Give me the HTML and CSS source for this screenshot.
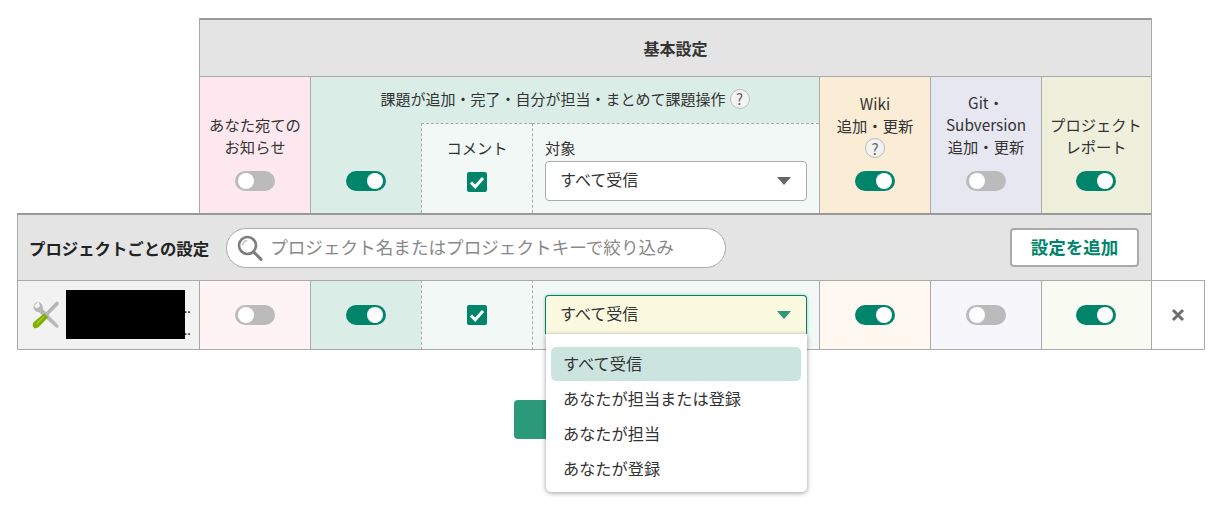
FILE: index.html
```html
<!DOCTYPE html>
<html lang="ja">
<head>
<meta charset="utf-8">
<title>通知設定</title>
<link rel="stylesheet" href="styles.css">
</head>
<body>
<main class="page">
  <div class="matrix">
    <div class="cell head-basic">基本設定</div>

    <div class="cell col-own tall bg-pink">
      <span class="label">あなた宛ての<br>お知らせ</span>
      <span class="toggle"></span>
    </div>
    <div class="cell issue-title bg-green">
      課題が追加・完了・自分が担当・まとめて課題操作
      <span class="help">?</span>
    </div>
    <div class="cell issue-toggle bg-green"><span class="toggle on"></span></div>
    <div class="cell issue-comment bg-light dashed dashed-top">
      <span class="label">コメント</span>
      <span class="check"><svg viewBox="0 0 20 20"><path d="M4 10.500 8.200 14.700 16 6" fill="none" stroke="#fff" stroke-width="3"/></svg></span>
    </div>
    <div class="cell issue-target bg-light dashed dashed-top">
      <span class="label">対象</span>
      <div class="select"><span>すべて受信</span><i class="caret"></i></div>
    </div>
    <div class="cell col-wiki tall bg-orange">
      <span class="label">Wiki<br>追加・更新<br><span class="help help-line">?</span></span>
      <span class="toggle on"></span>
    </div>
    <div class="cell col-git tall bg-lav">
      <span class="label">Git・<br>Subversion<br>追加・更新</span>
      <span class="toggle"></span>
    </div>
    <div class="cell col-report tall bg-olive edge">
      <span class="label">プロジェクト<br>レポート</span>
      <span class="toggle on"></span>
    </div>

    <div class="cell toolbar">
      <h2 class="toolbar-title">プロジェクトごとの設定</h2>
      <div class="search">
        <svg class="search-icon" viewBox="0 0 26 26"><circle cx="10.500" cy="10.500" r="8.500" fill="#fff" stroke="#7d7d7d" stroke-width="2.600"/><path d="M5.600 10.500a5 5 0 0 1 4.600-4.900" fill="none" stroke="#c4c4c4" stroke-width="1.600"/><path d="M16.800 17 24 24.400" stroke="#7d7d7d" stroke-width="3" stroke-linecap="round"/></svg>
        <span class="placeholder">プロジェクト名またはプロジェクトキーで絞り込み</span>
      </div>
      <button class="add-btn">設定を追加</button>
    </div>

    <div class="cell row project">
      <svg class="tools" viewBox="0 0 28 30">
        <path d="M25 3.500 11 18" stroke="#b5b5b5" stroke-width="3.600" stroke-linecap="round"/>
        <path d="M6.500 1.500a6 6 0 0 0-5 6.500c.6 2.600 2.800 4.200 5.300 3.900L24 27.500c1.500 1.200 3.400-.7 2.200-2.200L10.800 9c.4-3.200-1.300-6-4-7.200L8 6.300 5 8.500 1.900 6" fill="#b8b8b8"/>
        <path d="M12 13.500 2.500 21.500c-2.200 2-2.300 4.500-.9 5.900 1.400 1.400 3.800 1.200 5.600-.8l9-9.300z" fill="#7fb000"/>
        <path d="M12 16.500 4.500 24" stroke="#a2cf2a" stroke-width="1.200"/>
      </svg>
      <div class="project-name">
        <span class="name-line">…</span>
        <span class="name-line">…</span>
      </div>
    </div>
    <div class="cell row bg-pink-soft"><span class="toggle"></span></div>
    <div class="cell row bg-green"><span class="toggle on"></span></div>
    <div class="cell row bg-light dashed"><span class="check"><svg viewBox="0 0 20 20"><path d="M4 10.500 8.200 14.700 16 6" fill="none" stroke="#fff" stroke-width="3"/></svg></span></div>
    <div class="cell row row-target bg-light dashed">
      <div class="select open"><span>すべて受信</span><i class="caret"></i></div>
      <ul class="menu">
        <li class="menu-item active">すべて受信</li>
        <li class="menu-item">あなたが担当または登録</li>
        <li class="menu-item">あなたが担当</li>
        <li class="menu-item">あなたが登録</li>
      </ul>
    </div>
    <div class="cell row bg-orange-soft"><span class="toggle on"></span></div>
    <div class="cell row bg-lav-soft"><span class="toggle"></span></div>
    <div class="cell row bg-olive-soft edge"><span class="toggle on"></span></div>
    <div class="cell row close-cell">
      <svg class="close" viewBox="0 0 14 14"><path d="M2 2 12 12M12 2 2 12" stroke="#6f6f6f" stroke-width="3"/></svg>
    </div>
  </div>

  <div class="actions"><button class="save" aria-label="保存"></button></div>
</main>
</body>
</html>
```

FILE: styles.css
```css
* { box-sizing: border-box; }
html, body { margin: 0; padding: 0; background: #fff; }
body {
  font-family: "Noto Sans CJK JP", "Noto Sans", sans-serif;
  font-size: 15.300px;
  line-height: 22px;
  color: #333;
}
.page { padding: 18px 0 0 17px; height: 507px; }

.matrix {
  display: grid;
  grid-template-columns: 182px 111px 111px 111px 287px 111px 111px 111px 53px;
  grid-template-rows: 58px 47px 90px 67px 70px;
  width: 1188px;
}
.cell {
  border-left: 1px solid #aaa;
  border-top: 1px solid #aaa;
  display: flex;
  align-items: center;
  justify-content: center;
  min-width: 0;
}
.edge { border-right: 1px solid #aaa; padding-right: 1px; }

.head-basic {
  grid-column: 2 / 9;
  grid-row: 1;
  background: #e4e4e4;
  border-top: 2px solid #999;
  border-right: 1px solid #aaa;
  font-weight: 700;
  font-size: 16px;
}

.tall {
  grid-row: 2 / 4;
  flex-direction: column;
  justify-content: flex-end;
  padding-bottom: 22px;
  gap: 14px;
  text-align: center;
}
.col-own { grid-column: 2; }
.col-wiki { grid-column: 6; gap: 13px; }
.col-git { grid-column: 7; }
.col-report { grid-column: 8; }
.label { display: block; }

.issue-title { grid-column: 3 / 6; grid-row: 2; gap: 4px; padding-bottom: 3px; font-size: 15px; }
.issue-toggle { grid-column: 3; grid-row: 3; border-top: 0; align-items: flex-end; padding-bottom: 22px; }
.issue-comment {
  grid-column: 4; grid-row: 3;
  flex-direction: column;
  justify-content: flex-end;
  padding-bottom: 21px;
  gap: 14px;
}
.issue-target {
  grid-column: 5; grid-row: 3;
  flex-direction: column;
  align-items: flex-start;
  justify-content: flex-end;
  padding: 0 12px 12px 12px;
  gap: 3px;
}

.dashed { border-left: 1px dashed #aaa; }
.dashed-top { border-top: 1px dashed #aaa; }

.bg-pink { background: #fce8ee; }
.bg-green { background: #daeee7; }
.bg-light { background: #f2f8f6; }
.bg-orange { background: #fbecd6; }
.bg-lav { background: #e7e7f1; }
.bg-olive { background: #eff0db; }
.bg-pink-soft { background: #fef4f5; }
.bg-orange-soft { background: #fef8f0; }
.bg-lav-soft { background: #f6f6fb; }
.bg-olive-soft { background: #f9faf2; }

.toggle {
  display: block;
  position: relative;
  flex: none;
  width: 40px;
  height: 20px;
  border-radius: 10px;
  background: #bbb;
}
.toggle::after {
  content: "";
  position: absolute;
  top: 2px;
  left: 3px;
  width: 16px;
  height: 16px;
  border-radius: 50%;
  background: #fff;
}
.toggle.on { background: #00856b; }
.toggle.on::after { left: 21px; }

.check {
  display: block;
  flex: none;
  width: 20px;
  height: 20px;
  border-radius: 2px;
  background: #00856b;
}
.check svg { display: block; width: 20px; height: 20px; }

.help {
  display: inline-flex;
  align-items: center;
  justify-content: center;
  width: 20px;
  height: 20px;
  border-radius: 50%;
  border: 1px solid #bbb;
  background: #f3f3f3;
  color: #666;
  font-size: 15px;
  line-height: 1;
  vertical-align: middle;
}
.help-line { vertical-align: top; margin-top: 2px; }

.select {
  display: flex;
  align-items: center;
  justify-content: space-between;
  width: 262px;
  height: 40px;
  padding: 0 15px 4px 14px;
  background: #fff;
  border: 1px solid #aaa;
  border-radius: 4px;
  font-size: 16px;
}
.caret {
  display: block;
  width: 0;
  height: 0;
  margin-top: 4px;
  border-left: 7.500px solid transparent;
  border-right: 7.500px solid transparent;
  border-top: 8px solid #666;
}
.select.open {
  background: #fbf9e0;
  border-color: #00856b;
  border-bottom: 0;
  border-radius: 4px 4px 0 0;
  height: 39px;
  padding-bottom: 4px;
  box-shadow: 0 0 3px rgba(0, 133, 107, .45);
}
.select.open .caret { border-top-color: #2a9a7a; }

.toolbar {
  grid-column: 1 / 9;
  grid-row: 4;
  background: #e4e4e4;
  border-top: 2px solid #999;
  border-right: 1px solid #aaa;
  justify-content: flex-start;
  padding: 0 12px 0 11px;
}
.toolbar-title {
  margin: 0 17px 0 0;
  font-size: 16.400px;
  font-weight: 700;
  color: #222;
  white-space: nowrap;
}
.search {
  display: flex;
  align-items: center;
  flex: none;
  width: 500px;
  height: 40px;
  padding-left: 10px;
  gap: 7px;
  background: #fff;
  border: 1px solid #aaa;
  border-radius: 20px;
}
.search-icon { width: 26px; height: 26px; flex: none; }
.placeholder { font-size: 17.600px; color: #888; white-space: nowrap; padding-bottom: 2px; }
.add-btn {
  margin-left: auto;
  width: 129px;
  height: 39px;
  padding: 0 0 2px;
  background: #fff;
  border: 2px solid #aaa;
  border-radius: 4px;
  color: #00856b;
  font: 700 17.500px/1 "Noto Sans CJK JP", sans-serif;
}

.row { grid-row: 5; border-bottom: 1px solid #aaa; }
.project { justify-content: flex-start; padding-left: 14px; background: #f2f2f2; }
.tools { width: 28px; height: 30px; flex: none; }
.project-name {
  position: relative;
  display: flex;
  flex-direction: column;
  align-items: flex-end;
  width: 125px;
  height: 49px;
  margin: -1px 0 0 6px;
  padding-top: 8px;
  color: #222;
  font: 700 11px/22px "Liberation Sans", sans-serif;
}
.project-name::before {
  content: "";
  position: absolute;
  top: 0;
  left: 0;
  width: 119px;
  height: 49px;
  background: #000;
}
.name-line { display: block; height: 22px; }

.row-target { position: relative; justify-content: flex-start; padding-left: 12px; align-items: flex-start; padding-top: 14px; }
.menu {
  position: absolute;
  z-index: 2;
  top: 53px;
  left: 13px;
  width: 261px;
  height: 158px;
  margin: 0;
  padding: 13px 6px 6px 5px;
  list-style: none;
  background: #fff;
  border-radius: 0 0 5px 5px;
  box-shadow: 0 1px 5px rgba(0, 0, 0, .4);
  font-size: 16.200px;
}
.menu-item {
  display: flex;
  align-items: center;
  height: 35px;
  padding: 0 0 4px 12px;
  border-radius: 5px;
}
.menu-item.active { background: #cbe5de; height: 34px; margin-bottom: 1px; padding-bottom: 2px; }

.close-cell { border-left: 0; border-right: 1px solid #aaa; background: #fff; }
.close { width: 14px; height: 14px; }

.actions { display: flex; padding: 50px 0 0 497px; }
.save {
  width: 200px;
  height: 39px;
  padding: 0;
  border: 0;
  border-radius: 4px;
  background: #2a9a7a;
}
```
